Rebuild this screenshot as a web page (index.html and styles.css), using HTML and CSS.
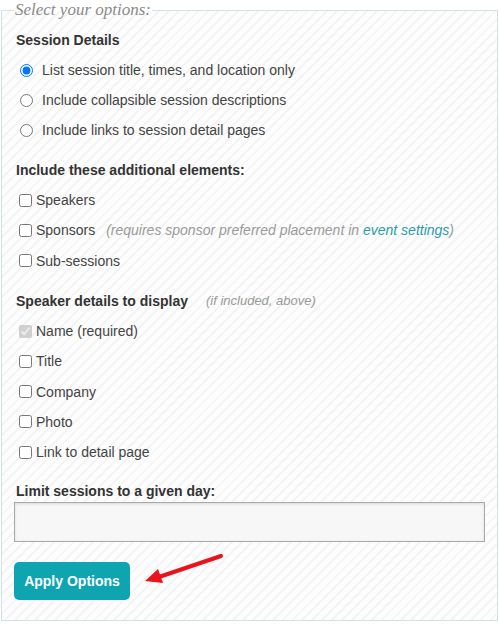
FILE: index.html
```html
<!DOCTYPE html>
<html>
<head>
<meta charset="utf-8">
<link rel="stylesheet" href="styles.css">
</head>
<body>
<form class="options">
  <fieldset class="panel">
    <legend class="panel-title">Select your options:</legend>

    <div class="group-title first">Session Details</div>
    <label class="opt radio-row"><input type="radio" name="detail" checked> List session title, times, and location only</label>
    <label class="opt radio-row"><input type="radio" name="detail"> Include collapsible session descriptions</label>
    <label class="opt radio-row"><input type="radio" name="detail"> Include links to session detail pages</label>

    <div class="group-title">Include these additional elements:</div>
    <label class="opt check-row"><input type="checkbox">Speakers</label>
    <label class="opt check-row"><input type="checkbox">Sponsors <span class="note wide">(requires sponsor preferred placement in <a href="#" class="link">event settings</a>)</span></label>
    <label class="opt check-row"><input type="checkbox">Sub-sessions</label>

    <div class="group-title">Speaker details to display <span class="note">(if included, above)</span></div>
    <label class="opt check-row"><input type="checkbox" checked disabled>Name (required)</label>
    <label class="opt check-row"><input type="checkbox">Title</label>
    <label class="opt check-row"><input type="checkbox">Company</label>
    <label class="opt check-row"><input type="checkbox">Photo</label>
    <label class="opt check-row"><input type="checkbox">Link to detail page</label>

    <label class="field-label" for="day">Limit sessions to a given day:</label>
    <input class="day-input" id="day" type="text">

    <div class="actions">
      <button type="button" class="apply">Apply Options</button>
      <svg class="arrow" width="90" height="40" viewBox="0 0 90 40">
        <line x1="77" y1="3" x2="12" y2="25" stroke="#e8131b" stroke-width="4" stroke-linecap="round"/>
        <polygon points="1,28 14,16 19,30" fill="#e8131b"/>
      </svg>
    </div>
  </fieldset>
</form>
</body>
</html>
```
FILE: styles.css
```css
html, body {
  margin: 0;
  padding: 0;
  background: #ffffff;
}
body {
  font-family: "Liberation Sans", Arial, sans-serif;
  font-size: 14px;
  color: #444444;
  width: 499px;
  height: 624px;
  overflow: hidden;
}
.options {
  margin: 0;
  padding: 0 0 0 1px;
}
.panel {
  margin: 0;
  width: 497px;
  box-sizing: border-box;
  height: 621px;
  border: 1px solid #cfe2e6;
  padding: 0 12px 0 12px;
  background: repeating-linear-gradient(135deg, #fdfdfd 0px, #fdfdfd 5px, #f4f4f4 5px, #f4f4f4 7px);
  position: relative;
}
.panel-title {
  font-family: "Liberation Serif", "DejaVu Serif", serif;
  font-style: italic;
  font-size: 17px;
  color: #8a8a8a;
  padding: 0 1px;
  margin-left: 0;
  line-height: 20px;
}
.group-title {
  font-weight: bold;
  color: #333333;
  height: 30px;
  display: flex;
  align-items: center;
  padding-left: 2px;
  margin-top: 10px;
}
.group-title.first {
  margin-top: 5px;
}
.group-title .note {
  margin-left: 18px;
}
.opt {
  display: flex;
  align-items: center;
  height: 30.3px;
  color: #444444;
  white-space: nowrap;
}
.radio-row {
  height: 30px;
}
.radio-row input {
  margin: 0 9px 0 6px;
  width: 13px;
  height: 13px;
}
.check-row input {
  margin: 0 4px 0 5px;
  width: 13px;
  height: 13px;
}
.note {
  font-style: italic;
  color: #9a9a9a;
  font-weight: normal;
  font-size: 13px;
  margin-left: 14px;
}
.note.wide {
  font-size: 14px;
  margin-left: 11px;
}
.link {
  color: #2a9ea8;
  text-decoration: none;
}
.field-label {
  display: block;
  font-weight: bold;
  color: #333333;
  margin-top: 16px;
  padding-left: 2px;
  line-height: 16px;
}
.day-input {
  display: block;
  box-sizing: border-box;
  width: 471px;
  height: 40px;
  margin: 3px 0 0 0;
  border: 1px solid #a9a9a9;
  background: #f7f7f7;
  box-shadow: inset 0 1px 3px rgba(0,0,0,0.12);
  border-radius: 0;
}
.actions {
  position: relative;
  margin-top: 20px;
}
.apply {
  width: 116px;
  height: 38px;
  border: none;
  border-radius: 5px;
  background: #0ea5b1;
  color: #ffffff;
  font-family: "Liberation Sans", Arial, sans-serif;
  font-weight: bold;
  font-size: 14px;
  padding: 0;
}
.arrow {
  position: absolute;
  left: 130px;
  top: -9px;
}
```
